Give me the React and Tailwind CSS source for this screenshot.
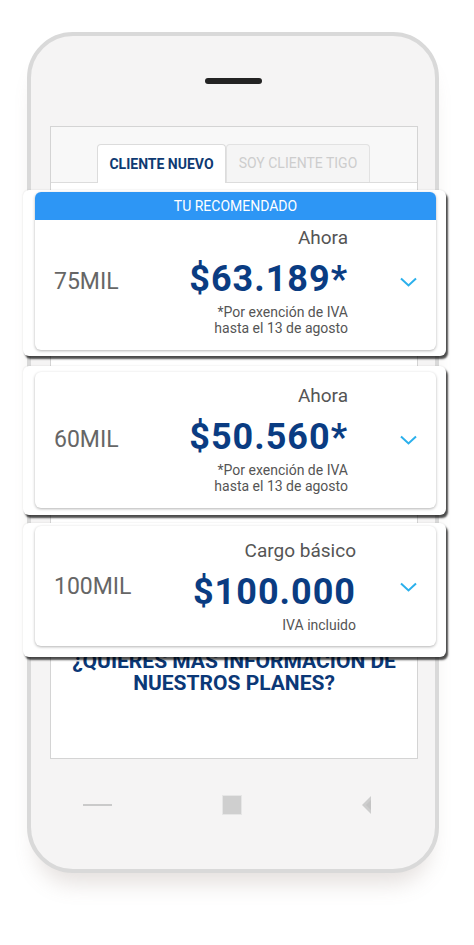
import React from "react";

const plans = [
  {
    label: "75MIL",
    top: "Ahora",
    price: "$63.189*",
    notes: ["*Por exención de IVA", "hasta el 13 de agosto"],
    recommended: true,
    outer: "mt-[7px] pt-[2px] pb-[6px]",
    body: "pt-[7px] pb-[14px]",
    chev: "w-[88px] pl-[52px]",
  },
  {
    label: "60MIL",
    top: "Ahora",
    price: "$50.560*",
    notes: ["*Por exención de IVA", "hasta el 13 de agosto"],
    outer: "mt-[10px] pt-[6px] pb-[7px]",
    body: "pt-[13px] pb-[14px]",
    chev: "w-[88px] pl-[52px]",
  },
  {
    label: "100MIL",
    top: "Cargo básico",
    price: "$100.000",
    notes: ["IVA incluido"],
    outer: "mt-[8px] pt-[3px] pb-[11px]",
    body: "pt-[14px] pb-[13px]",
    chev: "w-[80px] pl-[44px]",
  },
];

const Chevron = () => (
  <svg width="17" height="10" viewBox="0 0 17 10" fill="none">
    <polyline points="1,1.5 8.5,8.5 16,1.5" stroke="#2bb0ec" strokeWidth="2" />
  </svg>
);

const PlanCard = ({ plan }) => {
  return (
    <div
      className={`relative z-10 -ml-[28px] -mr-[29px] rounded-[6px] bg-white pl-[12px] pr-[10px] shadow-[2px_3px_2px_rgba(0,0,0,0.7),0_0_2px_rgba(0,0,0,0.12)] ${plan.outer}`}
    >
      <div className="overflow-hidden rounded-[6px] bg-white shadow-[0_1px_3px_rgba(0,0,0,0.3)]">
        {plan.recommended && (
          <div className="h-[28px] bg-[#2d96f5] text-center text-[14px] leading-[28px] text-white">
            TU RECOMENDADO
          </div>
        )}
        <div className={`flex items-center pl-[19px] ${plan.body}`}>
          <div className="text-[23px] leading-[28px] text-[#666]">{plan.label}</div>
          <div className="flex-1 text-right">
            <div className="text-[19px] leading-[22px] text-[#555]">{plan.top}</div>
            <div className="mt-[9px] text-[36px] font-bold leading-[42px] tracking-[1px] text-[#0a3c82]">
              {plan.price}
            </div>
            <div className="mt-[4px] text-[14px] leading-[16px] text-[#555]">
              {plan.notes.map((n) => (
                <div key={n}>{n}</div>
              ))}
            </div>
          </div>
          <div className={plan.chev}>
            <Chevron />
          </div>
        </div>
      </div>
    </div>
  );
};

const App = () => {
  return (
    <div className="h-[945px] w-full overflow-hidden bg-white font-['Roboto',sans-serif]">
      <div className="ml-[27px] mt-[32px] flex h-[841px] w-[412px] flex-col rounded-[46px] border-4 border-[#d9d9d9] bg-[#f5f4f4] shadow-[0_20px_22px_-10px_rgba(130,110,100,0.22)]">
        <div className="mx-auto mt-[42px] h-[6px] w-[57px] rounded-full bg-[#232323]" />

        <div className="ml-[19px] mt-[42px] flex h-[633px] w-[368px] flex-col border border-[#d4d4d4] bg-white">
          <div className="flex h-[56px] items-end border-b border-[#dcdcdc] bg-[#f8f8f8] pl-[46px]">
            <div className="-mb-px flex h-[39px] w-[129px] items-center justify-center rounded-t-[4px] border border-b-0 border-[#dcdcdc] bg-white text-[14px] font-bold text-[#0e3a72]">
              CLIENTE NUEVO
            </div>
            <div className="flex h-[38px] w-[144px] items-center justify-center rounded-t-[4px] border border-b-0 border-[#e2e2e2] bg-[#f5f5f5] text-[14px] text-[#cdcdcd]">
              SOY CLIENTE TIGO
            </div>
          </div>

          {plans.map((plan) => (
            <PlanCard key={plan.label} plan={plan} />
          ))}

          <div className="-mt-[7px] text-center text-[21px] font-bold leading-[22px] text-[#0b3877]">
            ¿QUIERES MÁS INFORMACIÓN DE
            <br />
            NUESTROS PLANES?
          </div>
        </div>

        <div className="mt-[37px] flex h-[18px] items-center">
          <div className="ml-[52px] h-[2px] w-[29px] bg-[#cacaca]" />
          <div className="ml-[111px] h-[18px] w-[18px] bg-[#cfcfcf] shadow-[0_0_0_1px_#e6e6e6]" />
          <svg className="ml-[120px]" width="11" height="18" viewBox="0 0 11 18">
            <polygon points="10,0 10,18 1,9" fill="#cdcdcd" />
            <polygon points="10,4 10,14 5,9" fill="#c4c4c4" />
          </svg>
        </div>
      </div>
    </div>
  );
};

export default App;
